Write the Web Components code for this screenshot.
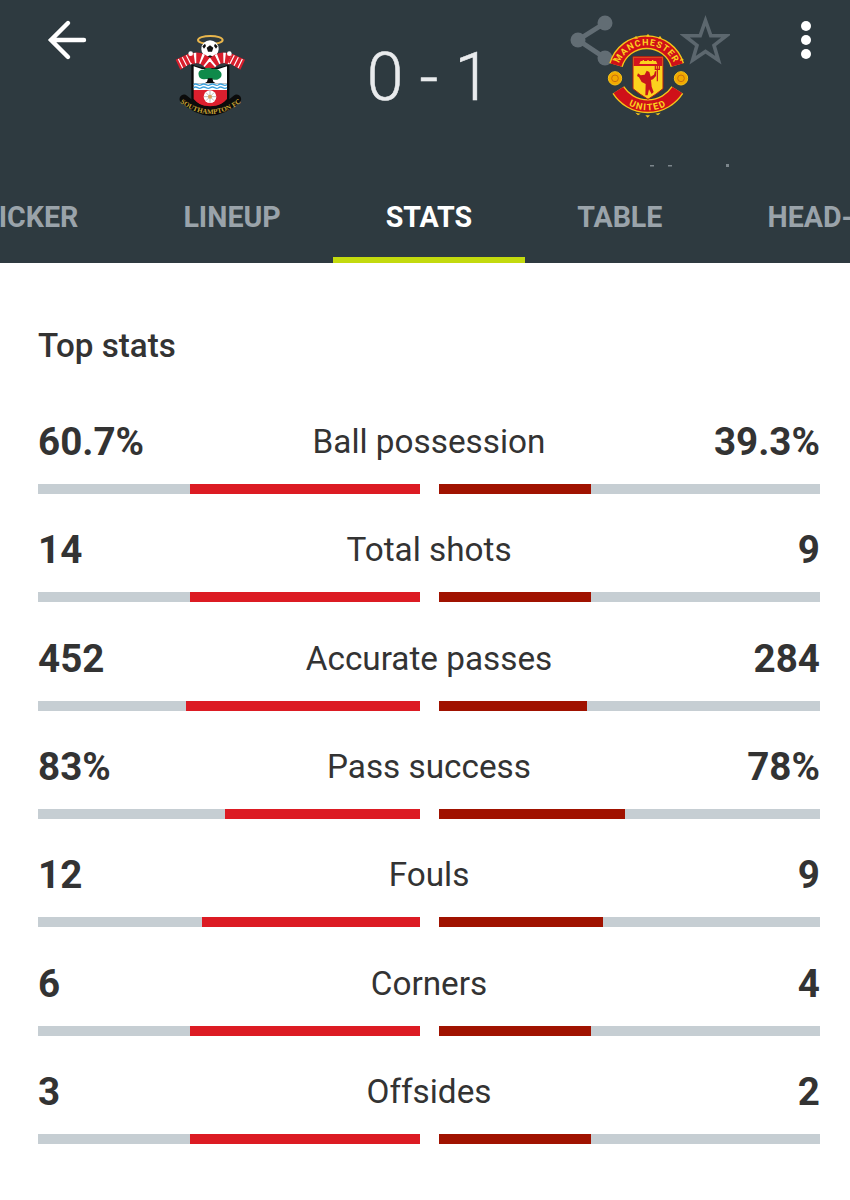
<!DOCTYPE html>
<html lang="en">
  <head>
    <meta charset="UTF-8" />
    <title>Match stats</title>
    <style>
      body {
        margin: 0;
        background: #fff;
        font-family: Roboto, "Liberation Sans", sans-serif;
        overflow: hidden;
      }
    </style>
    <script type="module">
      // Header with crests, score and the action icons
      class MatchHeader extends HTMLElement {
        constructor() {
          super();
          this.attachShadow({ mode: "open" }).innerHTML = `
            <style>
              :host {
                display: block;
                position: relative;
                height: 263px;
                background: #2e3a40;
                overflow: hidden;
              }
              .top {
                display: grid;
                grid-template-columns: 160px 100px 338px 100px 152px;
                height: 150px;
                padding-top: 25px;
                box-sizing: border-box;
              }
              .score {
                font-weight: 300;
                font-size: 66px;
                line-height: 106px;
                color: #e9ebed;
                text-align: center;
                height: 100px;
                white-space: pre;
                -webkit-text-stroke: 0.5px #e9ebed;
              }
              .back { margin: -8px 0 0 46px; }
              .more { margin: -8px 0 0 98px; }
              .crest { position: relative; z-index: 1; }
              .home { position: absolute; left: 160px; top: 25px; z-index: 1; }
              .share { position: absolute; left: 566px; top: 12px; }
              .star { position: absolute; left: 680px; top: 15px; }
              .specks { position: absolute; left: 640px; top: 160px; }
              ::slotted(match-tabs) { position: absolute; left: 0; right: 0; bottom: 0; }
            </style>
            <div class="top">
              <svg class="back" width="44" height="44" viewBox="0 -8 44 44" fill="none" stroke="#fff" stroke-width="4.4" stroke-linecap="round">
                <path d="M5 15H38M22 -2L5 15L22 32"/>
              </svg>
              <div></div>
              <div class="score"><slot name="score"></slot></div>
              <div class="crest"><slot name="away"></slot></div>
              <svg class="more" width="20" height="44" viewBox="0 0 20 44" fill="#fff">
                <circle cx="10" cy="9" r="5"/><circle cx="10" cy="23" r="5"/><circle cx="10" cy="37" r="5"/>
              </svg>
            </div>
            <svg class="share" width="50" height="60" viewBox="0 0 50 60" fill="#626d74" stroke="#626d74">
              <path d="M12 28L39 11M12 28L39 46" stroke-width="5" fill="none"/>
              <circle cx="12" cy="28" r="7.5" stroke="none"/>
              <circle cx="39" cy="11" r="7.5" stroke="none"/>
              <circle cx="39" cy="46" r="7.5" stroke="none"/>
            </svg>
            <svg class="star" width="50" height="50" viewBox="0 0 50 50" fill="none" stroke="#5c676e" stroke-width="3.6">
              <path d="M25.5 5.5L30.8 20.7H46.4L34 30.3L38.4 45.3L25.5 36.5L12.6 45.3L17 30.3L4.6 20.7H20.2Z"/>
            </svg>
            <svg class="specks" width="140" height="10" viewBox="0 0 140 10" fill="#7c868c">
              <rect x="10" y="5" width="4" height="1.5"/>
              <rect x="28" y="5" width="4" height="1.5"/>
              <rect x="86" y="4" width="3" height="3"/>
            </svg>
            <div class="home"><slot name="home"></slot></div>
            <slot></slot>
          `;
        }
      }
      customElements.define("match-header", MatchHeader);

      // Southampton badge, drawn in a 300 unit box over 100 pixels
      class SaintsCrest extends HTMLElement {
        constructor() {
          super();
          this.attachShadow({ mode: "open" }).innerHTML = `
            <style>:host { display: block; width: 100px; height: 100px; }</style>
            <svg width="100" height="100" viewBox="0 0 300 300">
              <ellipse cx="151" cy="45" rx="37" ry="12" fill="none" stroke="#e9b64c" stroke-width="6"/>
              <circle cx="150" cy="72" r="26" fill="#fff"/>
              <path d="M150 61l10 7-4 12h-12l-4-12z" fill="#111"/>
              <path d="M127 64l8-8 3 7-6 8zM173 64l-8-8-3 7 6 8zM138 96l12-5 12 5-12 3z" fill="#111"/>
              <!-- scarves -->
              <path d="M84 106Q118 86 150 120Q182 86 216 106" fill="none" stroke="#d81e2c" stroke-width="31"/>
              <path d="M84 106Q118 86 150 120Q182 86 216 106" fill="none" stroke="#fff" stroke-width="31" stroke-dasharray="6 14"/>
              <path d="M47 104L85 86L98 112L61 134Z" fill="#d81e2c"/>
              <path d="M55 102L68 129M67 97L80 122M79 91L92 116" stroke="#fff" stroke-width="3.5"/>
              <path d="M255 104L217 86L204 112L241 134Z" fill="#d81e2c"/>
              <path d="M247 102L234 129M235 97L222 122M223 91L210 116" stroke="#fff" stroke-width="3.5"/>
              <circle cx="92" cy="86" r="7" fill="#fff"/><circle cx="208" cy="86" r="7" fill="#fff"/>
              <!-- shield -->
              <path d="M94 118Q150 142 208 118V225Q190 248 150 258Q112 248 94 225Z" fill="#0b0b0b"/>
              <path d="M101 124Q150 146 201 124V175H101Z" fill="#fff"/>
              <path d="M116 150c-3-12 8-17 15-15 4-8 20-9 25-3 9-3 21 0 26 9 5 6 3 17-5 20-6 5-18 4-23 1h-16c-7 3-21 0-22-12z" fill="#0f8a4a"/>
              <path d="M144 160h13l3 10 6 4h-31l6-4z" fill="#0b0b0b"/>
              <rect x="101" y="175" width="100" height="20" fill="#fff"/>
              <path d="M101 179q6-4 12 0t12 0 13 0 13 0 13 0 12 0 12 0 13 0M101 188q6-4 12 0t12 0 13 0 13 0 13 0 12 0 12 0 13 0" fill="none" stroke="#3aa0dc" stroke-width="4"/>
              <path d="M101 195H201V222Q185 242 150 250Q117 242 101 222Z" fill="#dc1f2e"/>
              <circle cx="150" cy="215" r="19" fill="#fff"/>
              <path d="M150 197V233M132 215H168M138 203L162 227M162 203L138 227" stroke="#777" stroke-width="1.5"/>
              <circle cx="150" cy="215" r="6" fill="#d9a15a"/>
              <!-- banner -->
              <path d="M72 222Q150 294 230 222" fill="none" stroke="#0b0b0b" stroke-width="27" stroke-linecap="round"/>
              <path id="st" d="M60 232Q150 302 244 232" fill="none"/>
              <text font-family="Liberation Serif, serif" font-weight="700" font-size="21" fill="#c9a434" text-anchor="middle">
                <textPath href="#st" startOffset="50%">SOUTHAMPTON FC</textPath>
              </text>
            </svg>
          `;
        }
      }
      customElements.define("saints-crest", SaintsCrest);

      // Manchester United badge, same 300 unit box
      class UnitedCrest extends HTMLElement {
        constructor() {
          super();
          this.attachShadow({ mode: "open" }).innerHTML = `
            <style>:host { display: block; width: 100px; height: 100px; }</style>
            <svg width="100" height="100" viewBox="114 45 300 300">
              <path d="M168 165A96 96 0 0 1 352 165" fill="none" stroke="#f5c518" stroke-width="42"/>
              <path d="M168 165A96 96 0 0 1 352 165" fill="none" stroke="#cf1019" stroke-width="34"/>
              <path id="mt" d="M170 196A90 90 0 0 1 350 196" fill="none"/>
              <text font-family="Roboto, sans-serif" font-weight="700" font-size="27" fill="#fbd21e" text-anchor="middle" letter-spacing="3">
                <textPath href="#mt" startOffset="50%">MANCHESTER</textPath>
              </text>
              <path d="M175 240A105 105 0 0 0 352 240" fill="none" stroke="#f5c518" stroke-width="42"/>
              <path d="M175 240A105 105 0 0 0 352 240" fill="none" stroke="#cf1019" stroke-width="34"/>
              <path id="ut" d="M166 248A116 116 0 0 0 361 248" fill="none"/>
              <text font-family="Roboto, sans-serif" font-weight="700" font-size="28" fill="#fbd21e" text-anchor="middle" letter-spacing="4">
                <textPath href="#ut" startOffset="50%">UNITED</textPath>
              </text>
              <circle cx="165" cy="205" r="20" fill="#f2a900" stroke="#f5c518" stroke-width="3"/>
              <circle cx="363" cy="205" r="20" fill="#f2a900" stroke="#f5c518" stroke-width="3"/>
              <circle cx="165" cy="205" r="10" fill="none" stroke="#c9700f" stroke-width="3"/>
              <circle cx="363" cy="205" r="10" fill="none" stroke="#c9700f" stroke-width="3"/>
              <!-- shield -->
              <path d="M219 140H309V236Q290 252 264 268Q238 252 219 236Z" fill="#fbd21e" stroke="#b51a12" stroke-width="3"/>
              <rect x="221" y="142" width="86" height="26" fill="#d3131f"/>
              <path d="M238 162H292L288 153H242Z" fill="#fbd21e"/>
              <path d="M248 150h4v4h-4zM262 150h4v4h-4zM276 150h4v4h-4z" fill="#fbd21e"/>
              <!-- devil -->
              <path d="M234 190l8 6 12-2 6-12 8 4 4 14 10-6 3-10h4l-1 14-9 10-6 2 2 20 6 16-6 6-8-14-4 18h-7l1-34-12-6-8-14-6-4z" fill="#c8141c"/>
              <path d="M286 176v-8M292 176v-8M298 176v-8M284 178h16M292 176v38" fill="none" stroke="#c8141c" stroke-width="3.5"/>
              <!-- rivets -->
              <path d="M222 86l6-9 6 9zM258 80l6-9 6 9zM294 86l6-9 6 9zM156 150l8-7 5 10zM372 150l-8-7-5 10z" fill="#f5c518"/>
              <path d="M226 308l8 8 8-5zM256 316h14l-7 7zM286 311l8 5 8-8z" fill="#f5c518"/>
            </svg>
          `;
        }
      }
      customElements.define("united-crest", UnitedCrest);

      class MatchTabs extends HTMLElement {
        constructor() {
          super();
          this.attachShadow({ mode: "open" }).innerHTML = `
            <style>
              :host { display: block; overflow: hidden; }
              .strip { display: flex; margin-left: -71.5px; width: max-content; }
            </style>
            <div class="strip"><slot></slot></div>
          `;
        }
      }
      customElements.define("match-tabs", MatchTabs);

      class MatchTab extends HTMLElement {
        constructor() {
          super();
          this.attachShadow({ mode: "open" }).innerHTML = `
            <style>
              :host {
                display: block;
                padding: 0 52.5px;
                height: 76px;
                line-height: 60px;
                box-sizing: border-box;
                border-bottom: 6px solid transparent;
                font-weight: 700;
                font-size: 28.6px;
                color: #9aa3aa;
              }
              :host([active]) { color: #fff; border-bottom-color: #c3da0e; }
            </style>
            <slot></slot>
          `;
        }
      }
      customElements.define("match-tab", MatchTab);

      // One line of stats: values, label and the two bars
      class StatRow extends HTMLElement {
        constructor() {
          super();
          this.attachShadow({ mode: "open" }).innerHTML = `
            <style>
              :host { display: block; height: 108.33px; }
              .line {
                display: grid;
                grid-template-columns: 1fr auto 1fr;
                align-items: start;
                height: 62px;
                line-height: 40px;
                color: #333;
              }
              .val { font-weight: 700; font-size: 38.6px; }
              .val.r { text-align: right; }
              .label { font-size: 33.3px; font-weight: 400; }
              .bars { display: flex; gap: 19px; height: 10px; }
              .bar { flex: 1; background: #c6ced3; display: flex; }
              .bar.l { justify-content: flex-end; }
              .l i { background: #dc1b23; display: block; }
              .r i { background: #a01200; display: block; }
            </style>
            <div class="line">
              <span class="val"></span>
              <span class="label"><slot></slot></span>
              <span class="val r"></span>
            </div>
            <div class="bars">
              <div class="bar l"><i></i></div>
              <div class="bar r"><i></i></div>
            </div>
          `;
        }

        connectedCallback() {
          const vals = this.shadowRoot.querySelectorAll(".val");
          vals[0].textContent = this.getAttribute("home");
          vals[1].textContent = this.getAttribute("away");
          const fills = this.shadowRoot.querySelectorAll("i");
          fills[0].style.width = this.getAttribute("lw") + "px";
          fills[1].style.width = this.getAttribute("rw") + "px";
        }
      }
      customElements.define("stat-row", StatRow);

      class StatList extends HTMLElement {
        constructor() {
          super();
          this.attachShadow({ mode: "open" }).innerHTML = `
            <style>
              :host { display: block; padding: 0 30px 0 38px; }
              h2 {
                margin: 0;
                padding-top: 63px;
                height: 96px;
                line-height: 40px;
                font-size: 33.2px;
                font-weight: 500;
                color: #333;
              }
            </style>
            <h2><slot name="title"></slot></h2>
            <slot></slot>
          `;
        }
      }
      customElements.define("stat-list", StatList);
    </script>
  </head>

  <body>
    <match-header>
      <saints-crest slot="home"></saints-crest>
      <span slot="score">0 - 1</span>
      <united-crest slot="away"></united-crest>
      <match-tabs>
        <match-tab>TICKER</match-tab>
        <match-tab>LINEUP</match-tab>
        <match-tab active>STATS</match-tab>
        <match-tab>TABLE</match-tab>
        <match-tab>HEAD-TO-HEAD</match-tab>
      </match-tabs>
    </match-header>

    <stat-list>
      <span slot="title">Top stats</span>
      <stat-row home="60.7%" away="39.3%" lw="230" rw="152">Ball possession</stat-row>
      <stat-row home="14" away="9" lw="230" rw="152">Total shots</stat-row>
      <stat-row home="452" away="284" lw="234" rw="148">Accurate passes</stat-row>
      <stat-row home="83%" away="78%" lw="195" rw="186">Pass success</stat-row>
      <stat-row home="12" away="9" lw="218" rw="164">Fouls</stat-row>
      <stat-row home="6" away="4" lw="230" rw="152">Corners</stat-row>
      <stat-row home="3" away="2" lw="230" rw="152">Offsides</stat-row>
    </stat-list>
  </body>
</html>
